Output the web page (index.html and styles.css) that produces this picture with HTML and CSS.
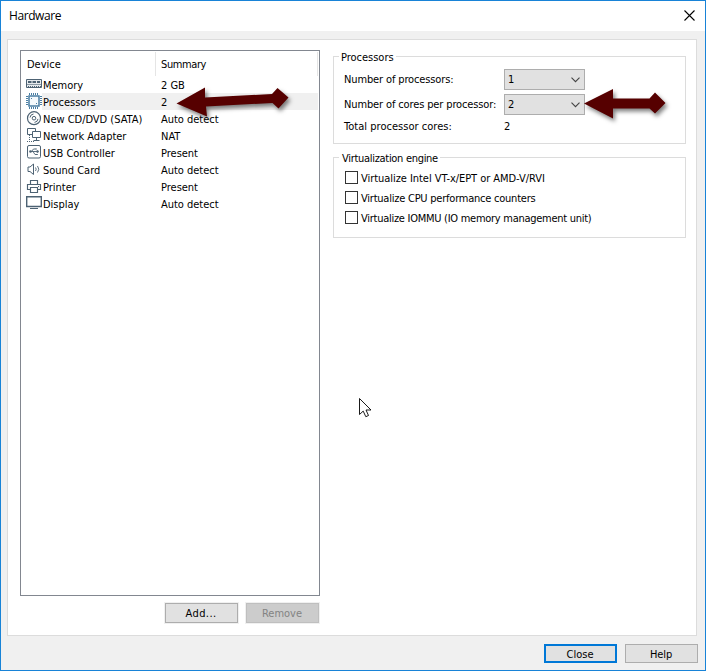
FILE: index.html
```html
<!DOCTYPE html>
<html lang="en">
<head>
<meta charset="utf-8">
<title>Hardware</title>
<link rel="stylesheet" href="styles.css">
</head>
<body>
<div class="window">
  <header class="titlebar">
    <h1>Hardware</h1>
    <svg class="close-x" width="11" height="11" viewBox="0 0 11 11"><path d="M.5.5l10 10M10.5.5l-10 10" stroke="#000" stroke-width="1.1"/></svg>
  </header>
  <main class="panel">
    <section class="devices">
      <div class="list">
        <div class="head"><span class="c1">Device</span><span class="c2">Summary</span></div>
        <div class="row">
          <svg width="18" height="17" viewBox="0 0 18 17" fill="none" stroke="#4d6273"><path d="M.5 3.500h15v8H.5z" fill="#e6eaed"/><path d="M2 6h3.500M6.500 6h3.500M11 6h3" stroke-width="2"/><path d="M1 8.500h14" stroke="#8b99a4"/><path d="M2 10.500h13" stroke-dasharray="1 1"/></svg>
          <span class="name">Memory</span><span class="sum">2 GB</span></div>
        <div class="row selected">
          <svg width="18" height="17" viewBox="0 0 18 17" fill="none" stroke="#4a7ea3"><path d="M3 3h10v10H3z" fill="#f4f9fc" stroke-width="1.500"/><path d="M3.500 0v2M5.500 0v2M7.500 0v2M9.500 0v2M11.500 0v2M3.500 14v2M5.500 14v2M7.500 14v2M9.500 14v2M11.500 14v2M0 3.500h2M0 5.500h2M0 7.500h2M0 9.500h2M0 11.500h2M14 3.500h2M14 5.500h2M14 7.500h2M14 9.500h2M14 11.500h2"/><path d="M5 5.500h1M10 10.500h1"/></svg>
          <span class="name">Processors</span><span class="sum">2</span></div>
        <div class="row">
          <svg width="18" height="17" viewBox="0 0 18 17" fill="none" stroke="#4d6273"><circle cx="8" cy="8.200" r="6.500" stroke-width="1.200"/><circle cx="8" cy="8.200" r="1.800"/><path d="M4 7.500A4 4 0 0 1 7.500 4M12 8.900A4 4 0 0 1 8.500 12.400"/></svg>
          <span class="name">New CD/DVD (SATA)</span><span class="sum">Auto detect</span></div>
        <div class="row">
          <svg width="18" height="17" viewBox="0 0 18 17" fill="none" stroke="#4d6273"><path d="M6 7.500H1.500v-6h8V4"/><path d="M6.500 4.500h8v6h-8zM10.500 11v2M7.500 13.500h6"/><path d="M3.500 8v5M1 14.500h8" stroke-dasharray="1 1"/></svg>
          <span class="name">Network Adapter</span><span class="sum">NAT</span></div>
        <div class="row">
          <svg width="18" height="17" viewBox="0 0 18 17" fill="none" stroke="#4d6273"><rect x="1.500" y="1.500" width="13" height="12.500" rx="1.500"/><path d="M4 7.500h8M5.500 7.500l2-2.500h2M7 7.500l2 3h2" stroke-width=".9"/><circle cx="4.500" cy="7.500" r="1.300" fill="#4d6273" stroke="none"/><path d="M9 5h2M10 10.500h2M11 6.300l2 1.200-2 1.200z" stroke-width=".8"/></svg>
          <span class="name">USB Controller</span><span class="sum">Present</span></div>
        <div class="row">
          <svg width="18" height="17" viewBox="0 0 18 17" fill="none" stroke="#4d6273"><path d="M2 6h2l3.500-3v10.500L4 10.500H2z"/><path d="M9.500 6.500q1.400 1.700 0 3.500M11.500 5q2.600 3.200 0 6.500" stroke-width=".9"/></svg>
          <span class="name">Sound Card</span><span class="sum">Auto detect</span></div>
        <div class="row">
          <svg width="18" height="17" viewBox="0 0 18 17" fill="none" stroke="#4d6273"><path d="M4.500 6V2.500h7V6M4 11.500H1.500v-5h13v5H12M4.500 9.500h7v5h-7z" stroke-width="1.150"/><path d="M12 8.500h1"/></svg>
          <span class="name">Printer</span><span class="sum">Present</span></div>
        <div class="row">
          <svg width="18" height="17" viewBox="0 0 18 17" fill="none" stroke="#4d6273"><path d="M.7 1.700h14.600v9.800H.7z" stroke-width="1.400"/><path d="M4 13.500h8"/></svg>
          <span class="name">Display</span><span class="sum">Auto detect</span></div>
      </div>
      <div class="actions"><button class="btn ringed add">Add...</button><button class="btn ringed" disabled>Remove</button></div>
    </section>
    <section class="settings">
      <div class="group processors">
        <h2>Processors</h2>
        <div class="field"><span class="label l1">Number of processors:</span><span class="select">1<svg width="9" height="6" viewBox="0 0 9 6"><path d="M.5.700l4 4 4-4" fill="none" stroke="#444" stroke-width="1.100"/></svg></span></div>
        <div class="field"><span class="label l2">Number of cores per processor:</span><span class="select">2<svg width="9" height="6" viewBox="0 0 9 6"><path d="M.5.700l4 4 4-4" fill="none" stroke="#444" stroke-width="1.100"/></svg></span></div>
        <div class="field total"><span class="label l3">Total processor cores:</span><span>2</span></div>
      </div>
      <div class="group engine">
        <h2>Virtualization engine</h2>
        <div class="check intel"><i></i><span>Virtualize Intel VT-x/EPT or AMD-V/RVI</span></div>
        <div class="check"><i></i><span>Virtualize CPU performance counters</span></div>
        <div class="check iommu"><i></i><span>Virtualize IOMMU (IO memory management unit)</span></div>
      </div>
    </section>
  </main>
  <footer class="footer"><button class="btn primary">Close</button><button class="btn help">Help</button></footer>
  <svg class="overlay" width="706" height="671" viewBox="0 0 706 671">
    <g class="arrow"><path d="M176.500 103.500L205 87.500v10l67-3.500 5.500-6 11 9.500-10 11-6-5.500-66.500 3.500 1 10z"/><path d="M584 103.500L613 89v9.500h36.500l5.500-6 10.500 10.500-10.500 10.500-5.500-5H613v10z"/></g>
    <path d="M359.500 398.500v16l3.700-3.400 2.600 5.600 2.700-1.200-2.500-5.500h5z" fill="#fff" stroke="#000" stroke-width=".9"/>
  </svg>
</div>
</body>
</html>
```
FILE: styles.css
```css
* { box-sizing: border-box; }
body { margin: 0; font: 11px/17px "DejaVu Sans Condensed", "DejaVu Sans", sans-serif; font-stretch: condensed; letter-spacing: -.23px; color: #000; }
.window { position: relative; width: 706px; height: 671px; border: 1px solid #1883d7; background: #f0f0f0; display: flex; flex-direction: column; }
.titlebar { height: 30px; background: #fff; display: flex; justify-content: space-between; padding: 0 10px 0 8px; align-items: center; }
h1 { margin: 0; font: 12px/16px "Open Sans", sans-serif; letter-spacing: -.42px; }
.close-x { margin-top: -2px; }
.panel { margin: 8px 8px 0 6px; height: 597px; background: #fff; border: 1px solid #dcdcdc; display: flex; padding: 10px 10px 0 12px; }
.devices { width: 300px; }
.list { height: 546px; border: 1px solid #828790; padding: 1px 1px 0 0; letter-spacing: -.02px; }
.head { height: 24px; display: flex; line-height: 26px; border-right: 1px solid #e5e5e5; }
.c1 { width: 135px; padding-left: 6px; border-right: 1px solid #e5e5e5; }
.c2 { padding-left: 5px; letter-spacing: -.4px; }
.row { height: 17px; display: flex; padding-left: 5px; line-height: 19px; }
.row svg { width: 18px; margin-right: -1px; flex: none; }
.row span { height: 17px; }
.name { width: 118px; }
.sum { flex: 1; }
.selected { background: linear-gradient(#f0f0f0, #f0f0f0) 21px 0 no-repeat; }
.actions { display: flex; justify-content: flex-end; gap: 8px; margin-top: 7px; padding-right: 1px; }
.btn { width: 73px; height: 19px; padding: 0 1px 0 0; border: 1px solid #adadad; background: #e1e1e1; font: inherit; letter-spacing: 0; color: #000; }
.ringed { height: 20px; box-shadow: 0 0 0 1px #f0f0f0; }
.add { letter-spacing: .4px; }
.btn:disabled { background: #ccc; border-color: #bfbfbf; color: #838383; }
.settings { width: 353px; margin-left: 13px; padding-top: 6px; }
.group { border: 1px solid #dcdcdc; padding-left: 10px; }
.processors { height: 88px; margin-bottom: 13px; }
.engine { height: 81px; }
h2 { width: max-content; font: inherit; height: 14px; line-height: 16px; margin: -7px 0 0 -5px; background: #fff; padding: 0 2px; letter-spacing: -.02px; }
.engine h2 { letter-spacing: -.3px; padding-left: 3px; margin-bottom: 3px; }
.field { display: flex; height: 21px; align-items: center; margin: 5px 0 4px; }
.field + .field { margin-top: 0; }
.label { width: 160px; }
.l1, .l2 { letter-spacing: -.13px; }
.l3 { letter-spacing: .03px; }
.select { width: 81px; height: 21px; border: 1px solid #adadad; background: #e1e1e1; display: flex; align-items: center; justify-content: space-between; padding: 0 4px 0 3px; }
.total { height: 14px; }
.check { display: flex; align-items: center; height: 20px; }
.check i { width: 13px; height: 13px; border: 1px solid #333; margin: -2px 3px 0 1px; }
.intel { letter-spacing: -.05px; }
.iommu { letter-spacing: -.27px; }
.footer { display: flex; justify-content: flex-end; gap: 8px; padding: 8px 7px 0 0; }
.primary { border: 2px solid #0078d7; }
.help { padding-top: 1px; letter-spacing: -.1px; }
.overlay { position: absolute; left: -1px; top: -1px; pointer-events: none; }
.arrow { fill: #560000; filter: drop-shadow(2px 3px 2px rgba(0,0,0,.5)); }
```
